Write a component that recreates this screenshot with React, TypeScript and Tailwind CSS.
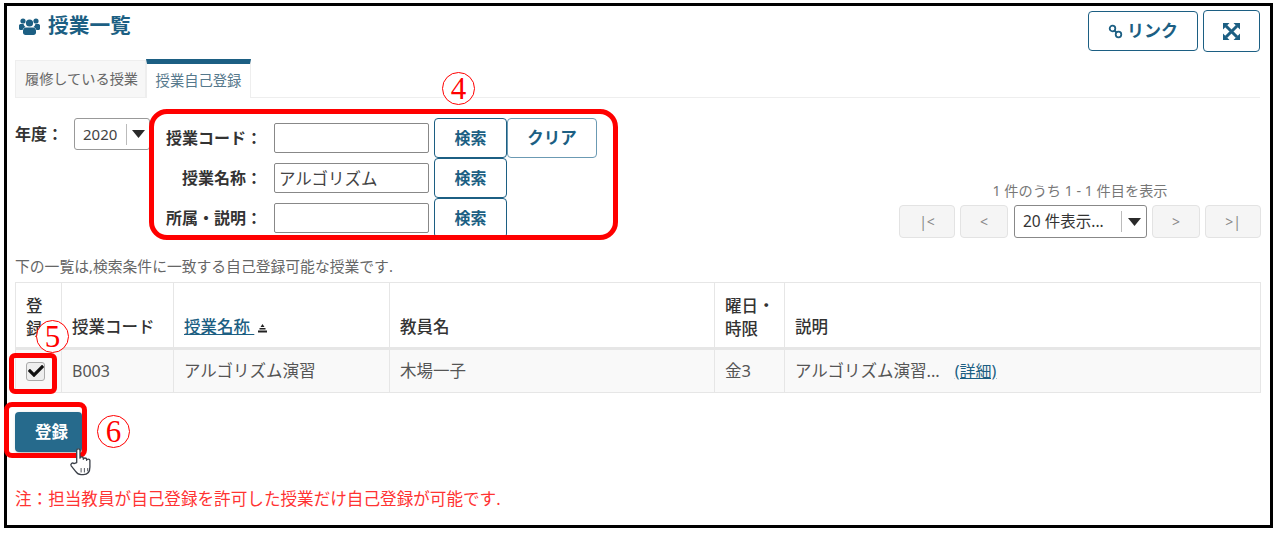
import { JSX } from "react";
import { FaCheck } from "react-icons/fa";

const font = "[font-family:'Noto_Sans','Noto_Sans_CJK_JP',sans-serif]";

const UsersIcon = (): JSX.Element => (
    <svg width="21" height="17" viewBox="0 0 21 17" fill="#1c5f83" className="shrink-0">
        <circle cx="4" cy="3" r="2.6" />
        <circle cx="17" cy="3" r="2.6" />
        <circle cx="10.5" cy="5" r="3.6" />
        <path d="M0 7.5C0 6.5 1 6 2 6h2.6c.3 1.2 1 2.3 2 3-1.6.6-2.6 1.6-3 3H1.2C.5 12 0 11.5 0 10.8zM21 7.5c0-1-1-1.500-2-1.500h-2.600c-.3 1.200-1 2.300-2 3 1.600.6 2.600 1.600 3 3h2.400c.7 0 1.200-.5 1.200-1.200z" />
        <path d="M7 9.500h7c1.800 0 3 1.400 3 3.200v1.800c0 1.400-1 2.500-2.500 2.500h-8C5 17 4 15.900 4 14.500v-1.800c0-1.800 1.200-3.200 3-3.200z" />
    </svg>
);

const LinkIcon = (): JSX.Element => (
    <svg width="15" height="15" viewBox="0 0 15 15" fill="none" stroke="#1c5f83" strokeWidth="1.8">
        <circle cx="4.5" cy="4.5" r="2.8" />
        <circle cx="10.5" cy="10.5" r="2.8" />
        <path d="M6.5 6.500l2 2" />
    </svg>
);

const ExpandIcon = (): JSX.Element => (
    <svg width="17" height="17" viewBox="0 0 17 17" fill="#1c5f83">
        <path d="M0 0h6.500L0 6.500zM17 0v6.500L10.500 0zM0 17v-6.500L6.500 17zM17 17h-6.500L17 10.500z" />
        <path d="M3 3l11 11M14 3L3 14" stroke="#1c5f83" strokeWidth="3" />
    </svg>
);

const Caret = ({ className }: { className: string }): JSX.Element => (
    <svg width="13" height="8" viewBox="0 0 13 8" fill="#2a2a2a" className={`shrink-0 ${className}`}>
        <path d="M0 0h13L6.500 8z" />
    </svg>
);

const HandCursor = (): JSX.Element => (
    <svg width="22" height="30" viewBox="0 0 20 27" fill="#fff" stroke="#3a3f48" strokeWidth="1.200" strokeLinejoin="round" className="absolute left-[62px] top-[441px]">
        <path d="M7 14V3c0-2 3-2 3 0v7c0-1.500 3-1.500 3 0v1c0-1.500 3-1.500 3 0v1c0-1.500 3-1.500 3 0v6c0 4-2 7-6 7h-2c-3 0-4-1.500-5-3l-4-5c-1-1.500 1-3.500 2.500-2z" />
        <path d="M11 19v4M14 19v4M17 19v3" fill="none" strokeWidth="0.800" />
    </svg>
);

type SearchRowProps = {
    label: string,
    value?: string,
    clear?: boolean
}

const SearchRow = ({ label, value, clear }: SearchRowProps): JSX.Element => {
    return (
        <div className="flex h-10 items-center">
            <label className="w-[111px] text-right text-[16px] font-bold text-[#333] whitespace-nowrap">{label}</label>
            <input readOnly value={value ?? ""} className="ml-3 w-[155px] h-[30px] px-1 text-[16.5px] text-[#444] border border-[#888] rounded-[2px]" />
            <button className="ml-[5px] w-[73px] h-10 border border-[#1c5f83] rounded-[4px] text-[16px] font-bold text-[#1c5f83] bg-white">検索</button>
            {clear && <button className="w-[90px] h-10 border border-[#6b9ab3] rounded-[4px] text-[16.5px] font-bold text-[#1c5f83] bg-white">クリア</button>}
        </div>
    )
}

const PageButton = ({ label, className }: { label: string, className: string }): JSX.Element => (
    <button className={`${className} h-[33px] bg-[#f5f5f5] border border-[#e3e3e3] rounded-[4px] text-[14px] text-[#888]`}>{label}</button>
);

const Circled = ({ digit, className }: { digit: string, className: string }): JSX.Element => (
    <span className={`absolute flex items-center justify-center w-[33px] h-[33px] rounded-full border-[1.5px] border-[#f00] bg-white text-[#f00] text-[31px] leading-none [font-family:'Liberation_Serif',serif] ${className}`}>{digit}</span>
);

const headCell = "border border-[#e6e6e6] border-b-[3px] px-[10px] pb-[7px] font-medium";
const bodyCell = "border border-[#e6e6e6] px-[10px]";

const App = (): JSX.Element => {
    return (
        <div className={`w-[1282px] h-[533px] pt-[3px] pl-1 bg-white ${font}`}>
            <div className="relative w-[1269px] h-[525px] border-[3px] border-black bg-white pl-2 pr-[10px]">
                <div className="flex justify-between h-[53px]">
                    <h1 className="flex items-center gap-2 pl-1 h-9 mt-[2px] text-[20.7px] font-bold text-[#1c5f83]">
                        <UsersIcon />
                        授業一覧
                    </h1>
                    <div className="flex gap-[5px] pt-1">
                        <button className="flex items-center justify-center gap-1 w-[110px] h-10 mt-[1px] border border-[#1c5f83] rounded-[4px] text-[17px] font-bold text-[#1c5f83]">
                            <LinkIcon />
                            リンク
                        </button>
                        <button className="flex items-center justify-center w-[57px] h-[42px] border border-[#1c5f83] rounded-[4px]">
                            <ExpandIcon />
                        </button>
                    </div>
                </div>

                <div className="flex h-[39px] border-b border-[#eee]">
                    <div className="w-[131px] mt-[1px] h-[38px] pl-[2px] flex items-center justify-center bg-[#f7f7f7] border border-[#eee] text-[14.2px] text-[#666] whitespace-nowrap">履修している授業</div>
                    <div className="w-[105px] h-[39px] flex items-center justify-center bg-white border-t-[5px] border-t-[#1c5f83] border-x border-x-[#eee] text-[14.3px] text-[#55788c]">授業自己登録</div>
                </div>

                <div className="flex h-[144px] pt-[20px]">
                    <div className="flex items-start w-[136px]">
                        <span className="w-[59px] mt-[4px] text-[16px] font-bold text-[#333] whitespace-nowrap">年度：</span>
                        <div className="flex items-center shrink-0 w-[76px] h-8 border border-[#999] rounded-[3px] pl-2 text-[15px] text-[#444]">
                            2020
                            <span className="ml-[9px] h-[21px] border-l border-[#bbb]" />
                            <Caret className="ml-[5px]" />
                        </div>
                    </div>
                    <div className="relative flex flex-col bg-white">
                        <SearchRow label="授業コード：" clear />
                        <SearchRow label="授業名称：" value="アルゴリズム" />
                        <SearchRow label="所属・説明：" />
                    </div>
                    <div className="ml-auto -mr-px flex flex-col items-center pt-[61px]">
                        <p className="text-[14.2px] text-[#777] leading-[24px]">1 件のうち 1 - 1 件目を表示</p>
                        <div className="flex gap-[5px] mt-[2px]">
                            <PageButton label="|<" className="w-14" />
                            <PageButton label="<" className="w-12" />
                            <div className="flex items-center w-[133px] h-[33px] ml-px border border-[#888] rounded-[3px] pl-2 text-[15.5px] text-[#333] whitespace-nowrap">
                                20 件表示...
                                <span className="ml-[17px] h-[21px] border-l border-[#bbb]" />
                                <Caret className="ml-[6px]" />
                            </div>
                            <PageButton label=">" className="w-12" />
                            <PageButton label=">|" className="w-14" />
                        </div>
                    </div>
                </div>

                <p className="h-[40px] pt-[15px] text-[14.8px] leading-[18px] text-[#666] whitespace-nowrap">下の一覧は,検索条件に一致する自己登録可能な授業です.</p>

                <table className="w-[1246px] table-fixed border-collapse text-[16.5px]">
                    <colgroup>
                        <col className="w-[46px]" />
                        <col className="w-[112px]" />
                        <col className="w-[216px]" />
                        <col className="w-[325px]" />
                        <col className="w-[70px]" />
                        <col />
                    </colgroup>
                    <thead>
                        <tr className="h-[66px] text-left align-bottom text-[#333]">
                            <th className={`${headCell} leading-[23px]`}>登<br />録</th>
                            <th className={headCell}>授業コード</th>
                            <th className={headCell}>
                                <span className="underline text-[#1c5f83]">授業名称 </span>
                                <svg className="inline ml-[3px]" width="11" height="9" viewBox="0 0 11 9" fill="#222"><path d="M5.500 0l2 3h-4zM2.500 4h6v1.500h-6zM1 6.500h9V8.500H1z" /></svg>
                            </th>
                            <th className={headCell}>教員名</th>
                            <th className={`${headCell} leading-[23px] whitespace-nowrap`}>曜日・<br />時限</th>
                            <th className={headCell}>説明</th>
                        </tr>
                    </thead>
                    <tbody>
                        <tr className="h-[44px] bg-[#f9f9f9] text-[#555]">
                            <td className="border border-[#e6e6e6] pl-[10px]">
                                <span className="flex items-center justify-center w-[19px] h-[19px] bg-[#eee] border border-[#aaa] rounded-[3px] text-[#111]">
                                    <FaCheck size={16} className="shrink-0" />
                                </span>
                            </td>
                            <td className={`${bodyCell} text-[16px]`}>B003</td>
                            <td className={bodyCell}>アルゴリズム演習</td>
                            <td className={bodyCell}>木場一子</td>
                            <td className={bodyCell}>金3</td>
                            <td className={`${bodyCell} whitespace-nowrap`}>
                                アルゴリズム演習...<span className="ml-[15px] text-[16px] underline text-[#1c5f83]">(詳細)</span>
                            </td>
                        </tr>
                    </tbody>
                </table>

                <button className="block w-[67px] h-10 mt-[19px] pl-[6px] bg-[#266a8c] rounded-[4px] text-[16.5px] font-bold text-white shadow-[2px_2px_4px_rgba(0,0,0,0.3)]">登録</button>

                <p className="mt-[37px] text-[16.6px] leading-5 whitespace-nowrap text-[#f33]">注：担当教員が自己登録を許可した授業だけ自己登録が可能です.</p>

                {/* annotations drawn over the page */}
                <div className="absolute left-[142px] top-[103px] w-[469px] h-[131px] border-[5px] border-[#f00] rounded-[18px]" />
                <div className="absolute left-[2px] top-[347px] w-[48px] h-[41px] border-[5px] border-[#f00] rounded-[6px]" />
                <div className="absolute -left-[3px] top-[396px] w-[83px] h-[56px] border-[5px] border-[#f00] rounded-[8px]" />
                <Circled digit="4" className="left-[435px] top-[66px]" />
                <Circled digit="5" className="left-[29px] top-[314px]" />
                <Circled digit="6" className="left-[90px] top-[409px]" />
                <HandCursor />
            </div>
        </div>
    )
}

export default App;
